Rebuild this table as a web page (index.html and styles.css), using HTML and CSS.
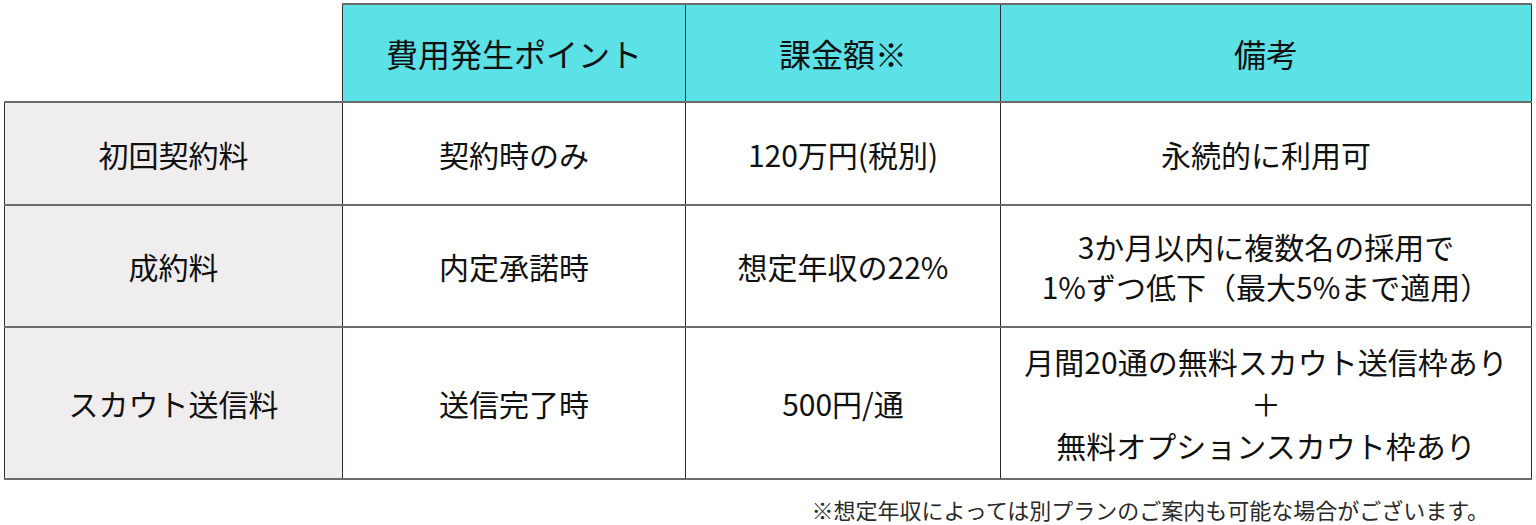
FILE: index.html
```html
<!DOCTYPE html>
<html lang="ja">
<head>
<meta charset="utf-8">
<title>料金表</title>
<link rel="stylesheet" href="styles.css">
</head>
<body>
<div class="page">
  <table class="fees">
    <colgroup>
      <col class="c1"><col class="c2"><col class="c3"><col class="c4">
    </colgroup>
    <thead>
      <tr class="head">
        <th class="blank"></th>
        <th>費用発生ポイント</th>
        <th>課金額※</th>
        <th>備考</th>
      </tr>
    </thead>
    <tbody>
      <tr class="r1">
        <th class="label">初回契約料</th>
        <td>契約時のみ</td>
        <td>120万円(税別)</td>
        <td>永続的に利用可</td>
      </tr>
      <tr class="r2">
        <th class="label">成約料</th>
        <td>内定承諾時</td>
        <td>想定年収の22%</td>
        <td>3か月以内に複数名の採用で<br>1%ずつ低下（最大5%まで適用）</td>
      </tr>
      <tr class="r3">
        <th class="label">スカウト送信料</th>
        <td>送信完了時</td>
        <td>500円/通</td>
        <td>月間20通の無料スカウト送信枠あり<br>＋<br>無料オプションスカウト枠あり</td>
      </tr>
    </tbody>
  </table>
  <p class="note">※想定年収によっては別プランのご案内も可能な場合がございます。</p>
</div>
</body>
</html>
```

FILE: styles.css
```css
html, body {
  margin: 0;
  padding: 0;
  background: #ffffff;
}
.page {
  padding: 3px 0 0 4px;
  font-family: "Noto Sans CJK JP", "Noto Sans", sans-serif;
  color: #111;
}
.fees {
  border-collapse: collapse;
  table-layout: fixed;
  width: 1527px;
}
.c1 { width: 338px; }
.c2 { width: 343px; }
.c3 { width: 315px; }
.c4 { width: 531px; }
.fees th, .fees td {
  border-left: 1.5px solid #2b2b2b;
  border-right: 1.5px solid #2b2b2b;
  border-top: 2px solid #6b6b6b;
  border-bottom: 2px solid #6b6b6b;
  text-align: center;
  vertical-align: middle;
  font-weight: 400;
  font-size: 30px;
  line-height: 42px;
  padding: 0;
}
.head th {
  background: #5ce1e6;
  font-size: 32px;
  height: 96px;
}
.head th.blank {
  background: transparent;
  border-top: none;
  border-left: none;
}
.fees th.label {
  background: #efedee;
}
.r1 td, .r1 th { height: 101px; }
.r2 td, .r2 th { height: 120px; line-height: 40px; }
.r3 td, .r3 th { height: 150px; }
.note {
  margin: 16px 47px 0 0;
  text-align: right;
  font-size: 22px;
  line-height: 26px;
  color: #2a2a2a;
}
```
